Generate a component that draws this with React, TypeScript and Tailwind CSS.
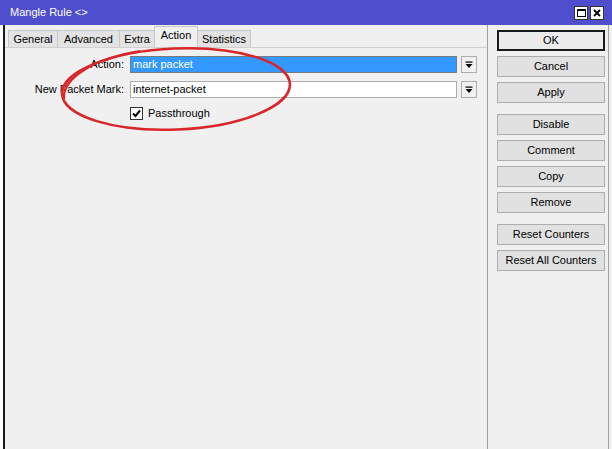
import React from 'react';

const tabs = [
  { label: 'General', w: 'w-[50px]' },
  { label: 'Advanced', w: 'w-[63px]' },
  { label: 'Extra', w: 'w-[36px]' },
  { label: 'Action', w: 'w-[44px]', active: true },
  { label: 'Statistics', w: 'w-[54px]' },
];

const buttons = [
  { label: 'OK', cls: 'mt-0', primary: true },
  { label: 'Cancel', cls: 'mt-[5px]' },
  { label: 'Apply', cls: 'mt-[5px]' },
  { label: 'Disable', cls: 'mt-[11px]' },
  { label: 'Comment', cls: 'mt-[5px]' },
  { label: 'Copy', cls: 'mt-[5px]' },
  { label: 'Remove', cls: 'mt-[5px]' },
  { label: 'Reset Counters', cls: 'mt-[11px]' },
  { label: 'Reset All Counters', cls: 'mt-[5px]' },
];

function DropArrow() {
  return (
    <div className="w-[16px] h-[17px] border border-[#adadad] bg-[#f0f0f0] flex items-center justify-center">
      <svg width="8" height="8" viewBox="0 0 8 8">
        <rect x="0.5" y="0.5" width="7" height="1.2" fill="#000" />
        <path d="M0.5 3 L7.5 3 L4 7 Z" fill="#000" />
      </svg>
    </div>
  );
}

export default function App() {
  return (
    <div
      className="relative w-[612px] h-[449px] bg-[#f0f0f0] flex flex-col text-[11px] text-black overflow-hidden"
      style={{ fontFamily: '"Liberation Sans", Arial, sans-serif' }}
    >
      {/* Title bar */}
      <div className="h-[25px] bg-[#4f4fcd] flex items-center pl-[10px] pr-[8px]">
        <span className="text-white text-[11px]">Mangle Rule &lt;&gt;</span>
        <div className="ml-auto flex gap-[2px]">
          <div className="w-[14px] h-[14px] bg-white border border-[#333] flex items-center justify-center">
            <div className="w-[9px] h-[8px] border border-black border-t-2" />
          </div>
          <div className="w-[14px] h-[14px] bg-white border border-[#333] flex items-center justify-center">
            <svg width="8" height="8" viewBox="0 0 8 8">
              <path d="M1 1 L7 7 M7 1 L1 7" stroke="#000" strokeWidth="1.8" />
            </svg>
          </div>
        </div>
      </div>

      <div className="flex-1 flex">
        <div className="w-[3px] bg-white" />
        <div className="w-[2px] bg-[#1a1a1a]" />

        {/* Main tab area */}
        <div className="w-[482px] flex flex-col">
          <div className="h-[22px] flex items-end pl-[3px]">
            {tabs.map(t => (
              <div
                key={t.label}
                className={
                  'flex items-center justify-center border border-b-0 border-[#c8c8c8] -mr-px ' +
                  t.w +
                  (t.active ? ' h-[21px] bg-[#f0f0f0] pb-[3px] relative z-10' : ' h-[17px] bg-[#e3e3e3]')
                }
              >
                {t.label}
              </div>
            ))}
          </div>
          <div className="flex-1 border-t border-[#d0d0d0] pt-[8px]">
            <div className="flex items-center h-[17px]">
              <div className="w-[120px] text-right pr-[1px]">Action:</div>
              <div className="ml-[5px] w-[327px] h-[17px] bg-[#3399ff] border border-[#7a7a7a] text-white pl-[2px] leading-[15px]">
                mark packet
              </div>
              <div className="ml-[4px]">
                <DropArrow />
              </div>
            </div>
            <div className="flex items-center h-[17px] mt-[8px]">
              <div className="w-[120px] text-right pr-[1px]">New Packet Mark:</div>
              <div className="ml-[5px] w-[327px] h-[17px] bg-white border border-[#adadad] pl-[2px] leading-[15px]">
                internet-packet
              </div>
              <div className="ml-[4px]">
                <DropArrow />
              </div>
            </div>
            <div className="flex items-center mt-[9px] ml-[125px] h-[13px]">
              <div className="w-[13px] h-[13px] bg-white border border-[#333] flex items-center justify-center">
                <svg width="9" height="9" viewBox="0 0 9 9">
                  <path d="M1 4.5 L3.5 7 L8 1.5" stroke="#000" strokeWidth="2" fill="none" />
                </svg>
              </div>
              <span className="ml-[5px]">Passthrough</span>
            </div>
          </div>
        </div>

        {/* Right button column */}
        <div className="w-[122px] border-l border-[#a0a0a0] border-r pl-[9px] pt-[5px] flex flex-col">
          {buttons.map(b => (
            <div
              key={b.label}
              className={
                'w-[108px] h-[21px] flex items-center justify-center bg-[#e1e1e1] ' +
                b.cls +
                (b.primary ? ' border-2 border-[#1a1a1a] bg-[#ececec]' : ' border border-[#adadad]')
              }
            >
              {b.label}
            </div>
          ))}
        </div>
        <div className="flex-1" />
      </div>

      {/* Red hand-drawn ellipse annotation */}
      <svg className="absolute left-0 top-0 pointer-events-none" width="612" height="449">
        <ellipse
          cx="176"
          cy="89"
          rx="114"
          ry="40.5"
          transform="rotate(-2.5 176 89)"
          fill="none"
          stroke="#d8262b"
          strokeWidth="2.6"
        />
        <path d="M64 99 C62 78, 95 58, 140 51" fill="none" stroke="#d8262b" strokeWidth="2.2" />
      </svg>
    </div>
  );
}
